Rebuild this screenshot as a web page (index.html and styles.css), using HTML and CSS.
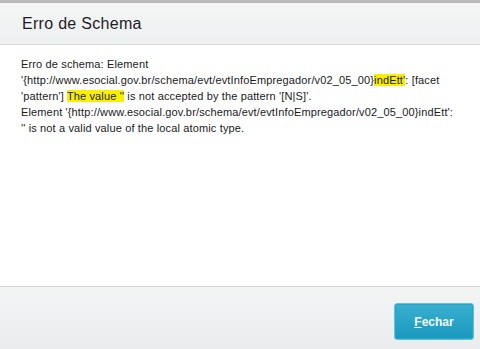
FILE: index.html
```html
<!DOCTYPE html>
<html lang="pt">
<head>
<meta charset="utf-8">
<title>Erro de Schema</title>
<link rel="stylesheet" href="styles.css">
</head>
<body>
<div class="dialog">
  <div class="header">
    <h1 class="title">Erro de Schema</h1>
  </div>
  <div class="content">
    <p class="message">Erro de schema: Element '{http://www.esocial.gov.br/schema/evt/evtInfoEmpregador/v02_05_00}<span class="hl">indEtt'</span>: [facet 'pattern'] <span class="hl">The value ''</span> is not accepted by the pattern '[N|S]'.<br>Element '{http://www.esocial.gov.br/schema/evt/evtInfoEmpregador/v02_05_00}indEtt': '' is not a valid value of the local atomic type.</p>
  </div>
  <div class="footer">
    <button class="btn" type="button"><span class="key">F</span>echar</button>
  </div>
</div>
</body>
</html>
```
FILE: styles.css
```css
html, body {
  margin: 0;
  padding: 0;
  background: #ffffff;
}
body {
  font-family: "Liberation Sans", Arial, sans-serif;
  color: #222;
}
.dialog {
  width: 480px;
  height: 349px;
  display: flex;
  flex-direction: column;
  box-sizing: border-box;
}
.header {
  border-top: 3px solid #bababa;
  border-bottom: 1px solid #dcdcdc;
  height: 41px;
  background: linear-gradient(#f4f5f4, #eeeff1);
  box-sizing: content-box;
}
.title {
  margin: 0;
  padding-left: 22px;
  font-size: 16px;
  letter-spacing: 0.3px;
  font-weight: normal;
  line-height: 42px;
  color: #1e1e1e;
}
.content {
  flex: 1;
  padding: 11px 20px 0 21px;
}
.message {
  margin: 0;
  font-size: 11px;
  letter-spacing: 0.14px;
  line-height: 16px;
  color: #1a1a1a;
}
.hl {
  background: #fbef00;
}
.footer {
  height: 63px;
  border-top: 1px solid #d8d8d8;
  background: linear-gradient(#f3f4f4, #ebecee);
  display: flex;
  justify-content: flex-end;
  align-items: flex-start;
  padding: 16px 6px 0 0;
  box-sizing: border-box;
  flex: none;
}
.btn {
  width: 80px;
  height: 37px;
  border: 1px solid #5cc2df;
  border-radius: 3px;
  background: linear-gradient(#3ab0d0, #1898bd);
  box-shadow: inset 0 0 0 1px #2aa5c8;
  color: #f4fbfd;
  font-family: "Liberation Sans", Arial, sans-serif;
  font-size: 12px;
  font-weight: bold;
  padding: 0;
  cursor: pointer;
}
.key {
  text-decoration: underline;
}
```
